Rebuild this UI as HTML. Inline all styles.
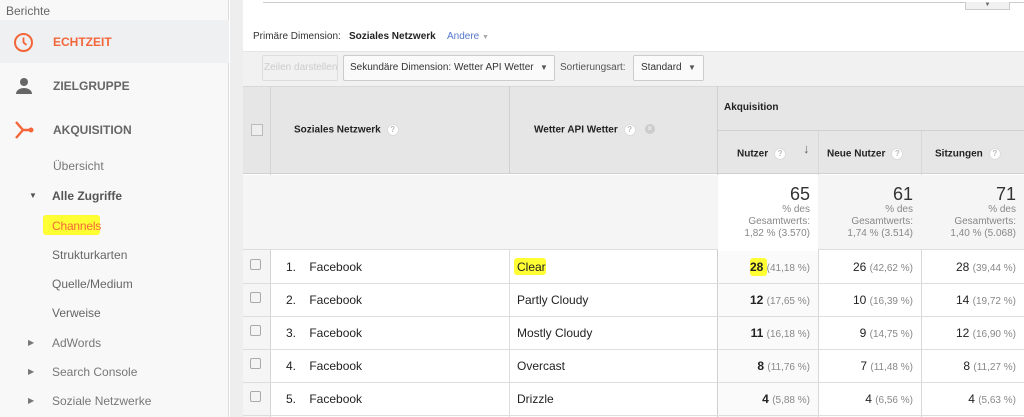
<!DOCTYPE html>
<html><head><meta charset="utf-8"><style>
*{margin:0;padding:0;box-sizing:border-box}
body{width:1024px;height:417px;overflow:hidden;background:#fff;font-family:"Liberation Sans",Arial,sans-serif;position:relative;color:#333}
.a{position:absolute;white-space:nowrap}
#sb{position:absolute;left:0;top:0;width:229px;height:417px;background:#f8f8f8;border-right:1px solid #ddd}
#gap{position:absolute;left:230px;top:0;width:13px;height:417px;background:#eeeeee}
.nav{font-size:12px;font-weight:bold;color:#666}
.sub{font-size:12px;color:#777}
.q{display:inline-block;width:12px;height:12px;border-radius:50%;background:#fff;border:1px solid #ddd;color:#bbb;font-size:8px;text-align:center;line-height:10px;vertical-align:middle;margin-left:6px}
.h{font-size:10px;font-weight:bold;color:#222}
.hl{background:#ffff33}
.cb{position:absolute;width:11px;height:11px;border:1px solid #aaa;border-radius:2px;background:#f4f4f4}
.v{font-size:12px;color:#222;text-align:right}
.v b{font-weight:bold}
.p{font-size:10px;color:#888}
.tot{font-size:10px;color:#888;text-align:right;line-height:12px}
.big{font-size:18px;color:#333;line-height:20px}
.dd{position:absolute;font-size:7px;color:#555}
</style></head><body>
<div id="sb"></div><div id="gap"></div>
<div class="a" style="left:6px;top:4px;font-size:12px;color:#666">Berichte</div>
<div class="a" style="left:0;top:20px;width:229px;height:43px;background:#eff0f2"></div>
<svg class="a" style="left:13px;top:32px" width="21" height="21" viewBox="0 0 21 21"><circle cx="10.5" cy="10.5" r="8.5" fill="none" stroke="#f4663a" stroke-width="2"/><path d="M10.5 5.5V10.5L13.5 13" fill="none" stroke="#f4663a" stroke-width="1.8"/></svg>
<div class="a nav" style="left:53px;top:35px;color:#f4663a">ECHTZEIT</div>
<svg class="a" style="left:15px;top:77px" width="18" height="18" viewBox="0 0 18 18"><circle cx="9" cy="5" r="4" fill="#666"/><path d="M1 17c0-4 4-6 8-6s8 2 8 6z" fill="#666"/></svg>
<div class="a nav" style="left:53px;top:79px">ZIELGRUPPE</div>
<svg class="a" style="left:14px;top:120px" width="20" height="20" viewBox="0 0 20 20"><path d="M2 2L9 10L2 18M9 10H17" fill="none" stroke="#f4663a" stroke-width="2.4"/><circle cx="17" cy="10" r="2.5" fill="#f4663a"/></svg>
<div class="a nav" style="left:53px;top:123px">AKQUISITION</div>
<div class="a sub" style="left:53px;top:159px">Übersicht</div>
<div class="a" style="left:29px;top:191px;font-size:8px;color:#555">▼</div>
<div class="a sub" style="left:52px;top:189px;color:#555;font-weight:bold">Alle Zugriffe</div>
<div class="a hl" style="left:43px;top:215px;width:57px;height:20px;border-radius:3px"></div>
<div class="a sub" style="left:52px;top:219px;color:#f4663a;letter-spacing:-0.2px">Channels</div>
<div class="a sub" style="left:52px;top:248px;color:#666">Strukturkarten</div>
<div class="a sub" style="left:52px;top:277px;color:#666">Quelle/Medium</div>
<div class="a sub" style="left:52px;top:306px;color:#666">Verweise</div>
<div class="a" style="left:28px;top:338px;font-size:8px;color:#777">▶</div>
<div class="a sub" style="left:52px;top:336px">AdWords</div>
<div class="a" style="left:28px;top:367px;font-size:8px;color:#777">▶</div>
<div class="a sub" style="left:52px;top:365px">Search Console</div>
<div class="a" style="left:28px;top:396px;font-size:8px;color:#777">▶</div>
<div class="a sub" style="left:52px;top:394px">Soziale Netzwerke</div>

<div class="a" style="left:263px;top:2px;width:761px;height:1px;background:#ccc"></div>
<div class="a" style="left:965px;top:2px;width:45px;height:8px;background:#f1f1f1;border:1px solid #ccc;border-top:none;font-size:6px;text-align:center;color:#666;line-height:6px">▼</div>
<div class="a" style="left:253px;top:31px;font-size:10px;color:#333">Primäre Dimension:</div>
<div class="a" style="left:349px;top:31px;font-size:10px;font-weight:bold;color:#222">Soziales Netzwerk</div>
<div class="a" style="left:447px;top:31px;font-size:10px;color:#5577cc">Andere <span style="color:#aaa;font-size:7px">▼</span></div>
<div class="a" style="left:243px;top:51px;width:781px;height:35px;background:#f1f1f1;border-top:1px solid #e4e4e4"></div>
<div class="a" style="left:262px;top:55px;width:76px;height:26px;border:1px solid #ddd;border-radius:2px;font-size:10px;color:#ccc;line-height:24px;padding-left:1px;overflow:hidden">Zeilen darstellen</div>
<div class="a" style="left:343px;top:55px;width:212px;height:26px;border:1px solid #ccc;border-radius:2px;background:#fafafa;font-size:10px;color:#333;line-height:24px;padding-left:6px">Sekundäre Dimension: Wetter API Wetter</div>
<div class="dd" style="left:540px;top:63px;font-size:8px">▼</div>
<div class="a" style="left:560px;top:62px;font-size:10px;color:#555">Sortierungsart:</div>
<div class="a" style="left:633px;top:55px;width:71px;height:26px;border:1px solid #ccc;border-radius:2px;background:#fafafa;font-size:10px;color:#333;line-height:24px;padding-left:7px">Standard</div>
<div class="dd" style="left:688px;top:63px;font-size:8px">▼</div>

<div class="a" style="left:243px;top:86px;width:781px;height:88px;background:#e6e6e6;border-top:1px solid #d8d8d8;border-bottom:1px solid #d0d0d0"></div>
<div class="a" style="left:270px;top:86px;width:1px;height:331px;background:#d4d4d4"></div>
<div class="a" style="left:509px;top:86px;width:1px;height:88px;background:#d0d0d0"></div>
<div class="a" style="left:509px;top:250px;width:1px;height:167px;background:#ddd"></div>
<div class="a" style="left:717px;top:86px;width:1px;height:331px;background:#d0d0d0"></div>
<div class="a" style="left:818px;top:130px;width:1px;height:287px;background:#d8d8d8"></div>
<div class="a" style="left:921px;top:130px;width:1px;height:287px;background:#d8d8d8"></div>
<div class="a" style="left:717px;top:130px;width:307px;height:1px;background:#d0d0d0"></div>
<div class="cb" style="left:251px;top:124px;width:12px;height:12px;border-radius:0;background:#eee;border-color:#bbb"></div>
<div class="a h" style="left:294px;top:124px">Soziales Netzwerk<span class="q">?</span></div>
<div class="a h" style="left:534px;top:124px">Wetter API Wetter<span class="q">?</span><span style="display:inline-block;width:10px;height:10px;border-radius:50%;background:#ccc;margin-left:9px;vertical-align:top;color:#eee;font-size:8px;line-height:10px;text-align:center">×</span></div>
<div class="a h" style="left:724px;top:102px">Akquisition</div>
<div class="a h" style="left:737px;top:148px">Nutzer<span class="q">?</span></div>
<div class="a" style="left:803px;top:141px;font-size:13px;color:#666">↓</div>
<div class="a h" style="left:827px;top:148px">Neue Nutzer<span class="q">?</span></div>
<div class="a h" style="left:935px;top:148px">Sitzungen<span class="q">?</span></div>

<div class="a" style="left:243px;top:175px;width:781px;height:75px;background:#f5f5f5;border-bottom:1px solid #ddd"></div>
<div class="a" style="left:718px;top:175px;width:100px;height:75px;background:#fff"></div>
<div class="a tot" style="left:718px;top:184px;width:92px"><div class="big">65</div>% des<br>Gesamtwerts:<br>1,82 % (3.570)</div>
<div class="a tot" style="left:819px;top:184px;width:94px"><div class="big">61</div>% des<br>Gesamtwerts:<br>1,74 % (3.514)</div>
<div class="a tot" style="left:922px;top:184px;width:94px"><div class="big">71</div>% des<br>Gesamtwerts:<br>1,40 % (5.068)</div>

<div class="a" style="left:243px;top:250px;width:27px;height:167px;background:#f5f5f5"></div>
<div class="a" style="left:718px;top:251px;width:100px;height:166px;background:#fafafa"></div>
<div class="a" style="left:243px;top:283px;width:781px;height:1px;background:#ddd"></div>
<div class="a" style="left:243px;top:316px;width:781px;height:1px;background:#ddd"></div>
<div class="a" style="left:243px;top:349px;width:781px;height:1px;background:#ddd"></div>
<div class="a" style="left:243px;top:382px;width:781px;height:1px;background:#ddd"></div>
<div class="a" style="left:243px;top:415px;width:781px;height:1px;background:#ddd"></div>

<div class="cb" style="left:250px;top:259px"></div>
<div class="a" style="left:286px;top:260px;font-size:12px;color:#222">1.&nbsp;&nbsp;&nbsp;&nbsp;Facebook</div>
<div class="a hl" style="left:514px;top:258px;width:32px;height:17px;border-radius:3px"></div>
<div class="a" style="left:517px;top:260px;font-size:12px;color:#222">Clear</div>
<div class="a hl" style="left:750px;top:258px;width:17px;height:18px;border-radius:3px"></div>
<div class="a v" style="left:718px;top:260px;width:92px"><b>28</b> <span class="p">(41,18 %)</span></div>
<div class="a v" style="left:819px;top:260px;width:94px">26 <span class="p">(42,62 %)</span></div>
<div class="a v" style="left:922px;top:260px;width:94px">28 <span class="p">(39,44 %)</span></div>

<div class="cb" style="left:250px;top:292px"></div>
<div class="a" style="left:286px;top:293px;font-size:12px;color:#222">2.&nbsp;&nbsp;&nbsp;&nbsp;Facebook</div>
<div class="a" style="left:517px;top:293px;font-size:12px;color:#222">Partly Cloudy</div>
<div class="a v" style="left:718px;top:293px;width:92px"><b>12</b> <span class="p">(17,65 %)</span></div>
<div class="a v" style="left:819px;top:293px;width:94px">10 <span class="p">(16,39 %)</span></div>
<div class="a v" style="left:922px;top:293px;width:94px">14 <span class="p">(19,72 %)</span></div>

<div class="cb" style="left:250px;top:325px"></div>
<div class="a" style="left:286px;top:326px;font-size:12px;color:#222">3.&nbsp;&nbsp;&nbsp;&nbsp;Facebook</div>
<div class="a" style="left:517px;top:326px;font-size:12px;color:#222">Mostly Cloudy</div>
<div class="a v" style="left:718px;top:326px;width:92px"><b>11</b> <span class="p">(16,18 %)</span></div>
<div class="a v" style="left:819px;top:326px;width:94px">9 <span class="p">(14,75 %)</span></div>
<div class="a v" style="left:922px;top:326px;width:94px">12 <span class="p">(16,90 %)</span></div>

<div class="cb" style="left:250px;top:358px"></div>
<div class="a" style="left:286px;top:359px;font-size:12px;color:#222">4.&nbsp;&nbsp;&nbsp;&nbsp;Facebook</div>
<div class="a" style="left:517px;top:359px;font-size:12px;color:#222">Overcast</div>
<div class="a v" style="left:718px;top:359px;width:92px"><b>8</b> <span class="p">(11,76 %)</span></div>
<div class="a v" style="left:819px;top:359px;width:94px">7 <span class="p">(11,48 %)</span></div>
<div class="a v" style="left:922px;top:359px;width:94px">8 <span class="p">(11,27 %)</span></div>

<div class="cb" style="left:250px;top:391px"></div>
<div class="a" style="left:286px;top:392px;font-size:12px;color:#222">5.&nbsp;&nbsp;&nbsp;&nbsp;Facebook</div>
<div class="a" style="left:517px;top:392px;font-size:12px;color:#222">Drizzle</div>
<div class="a v" style="left:718px;top:392px;width:92px"><b>4</b> <span class="p">(5,88 %)</span></div>
<div class="a v" style="left:819px;top:392px;width:94px">4 <span class="p">(6,56 %)</span></div>
<div class="a v" style="left:922px;top:392px;width:94px">4 <span class="p">(5,63 %)</span></div>
</body></html>
